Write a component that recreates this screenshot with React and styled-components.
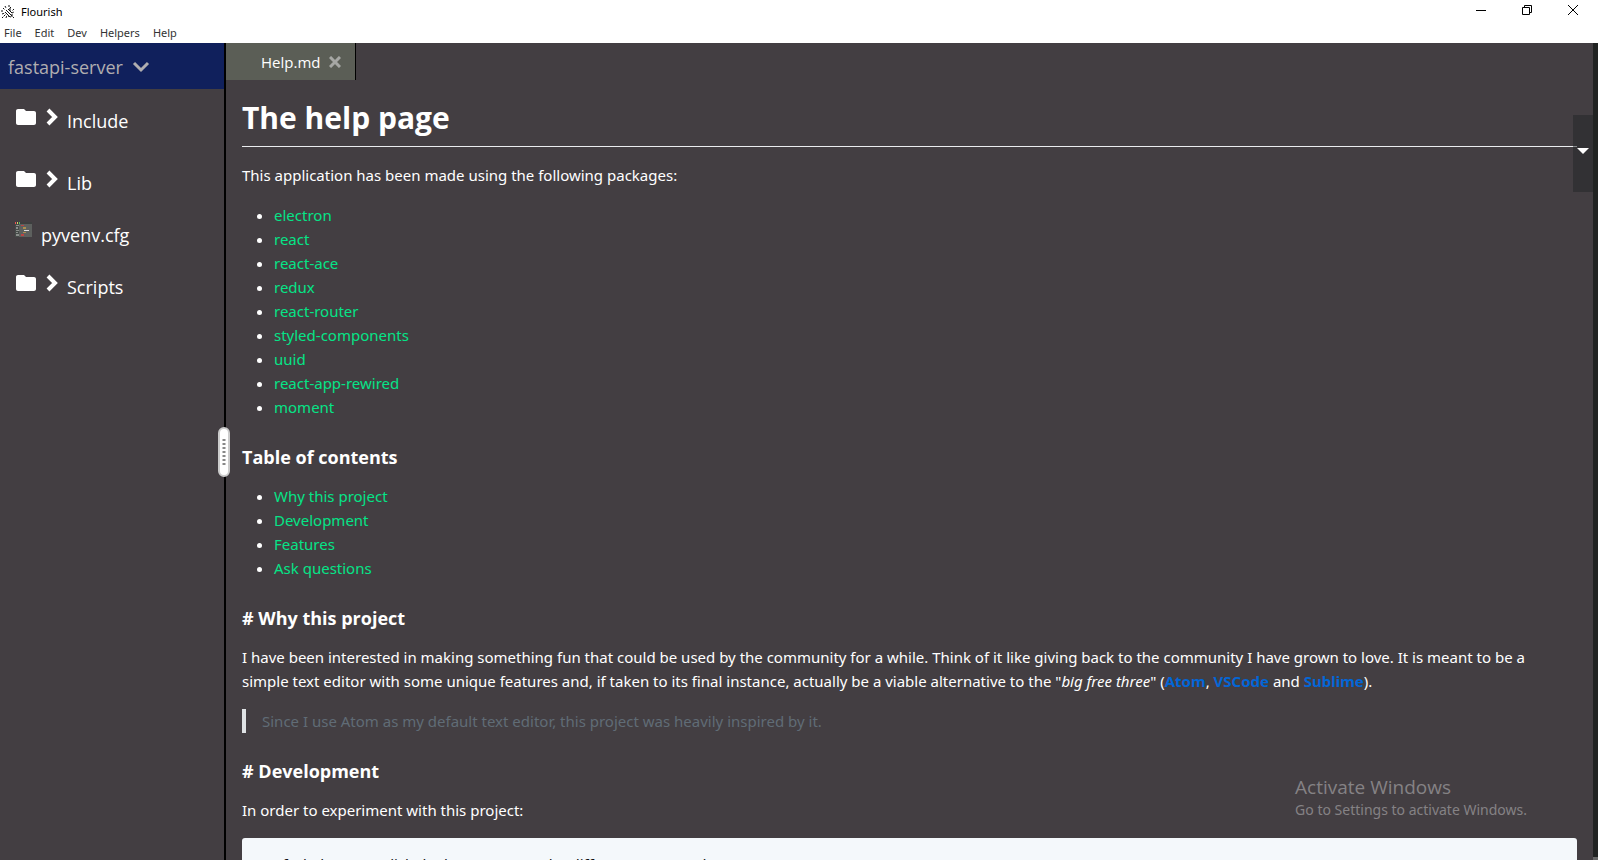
import React from "react";
import styled, { createGlobalStyle } from "styled-components";
import { MdFolder } from "react-icons/md";

const Global = createGlobalStyle`
  * { box-sizing: border-box; }
  html, body, #root { height: 100%; }
  body {
    margin: 0;
    overflow: hidden;
    background: #433e42;
    color: #fff;
    font: 15px/24px "Open Sans", "Noto Sans", sans-serif;
  }
  button { border: 0; padding: 0; background: none; color: inherit; font: inherit; }
  a { text-decoration: none; }
`;

const Window = styled.div`
  display: flex;
  flex-direction: column;
  height: 100vh;
`;

const TitleBar = styled.header`
  display: flex;
  justify-content: space-between;
  flex: none;
  height: 22px;
  background: #fff;
  color: #000;
`;

const AppName = styled.div`
  display: flex;
  align-items: center;
  gap: 5px;
  padding-top: 1px;
  font-family: "Noto Sans", sans-serif;
  font-size: 11px;
  line-height: 22px;
`;

const WindowControls = styled.div`
  display: flex;
  padding-right: 2px;
`;

const ControlButton = styled.button`
  display: flex;
  align-items: center;
  justify-content: center;
  width: 46px;
  height: 20px;
`;

const MenuBar = styled.nav`
  display: flex;
  flex: none;
  gap: 13px;
  height: 21px;
  padding: 0 4px;
  background: #fff;
  color: #333;
  font-family: "Noto Sans", sans-serif;
  font-size: 11px;
  line-height: 21px;
`;

const Workspace = styled.div`
  display: flex;
  flex: 1;
  min-height: 0;
`;

const Sidebar = styled.aside`
  flex: none;
  width: 224px;
`;

const ProjectButton = styled.button`
  display: flex;
  align-items: center;
  gap: 9px;
  width: 100%;
  height: 46px;
  padding: 2px 8px 0;
  background: #10205c;
  color: #b0aeb0;
  font-size: 18px;
`;

const Tree = styled.ul`
  margin: 0;
  padding: 0;
  list-style: none;
`;

const TreeItem = styled.li`
  display: flex;
  height: ${(p) => (p.$file ? "42px" : "62px")};
  padding: ${(p) => (p.$file ? "6px 14px 0" : "16px 14px 0")};
`;

const TreeButton = styled.button`
  display: flex;
  align-items: flex-start;
  gap: ${(p) => (p.$file ? "9px" : "8px")};
  height: 32px;
  font-size: 18px;
  line-height: 32px;
  text-align: left;

  svg { flex: none; }
  span { padding-left: ${(p) => (p.$file ? "0" : "1px")}; }
`;

const Divider = styled.div`
  position: relative;
  flex: none;
  width: 2px;
  background: #000;
`;

const Handle = styled.button`
  position: absolute;
  top: 47%;
  left: 50%;
  z-index: 2;
  display: flex;
  align-items: center;
  justify-content: center;
  width: 12px;
  height: 50px;
  margin-left: -7px;
  border: 2px solid #ccc;
  border-radius: 6px;
  background: #fff;
`;

const Editor = styled.main`
  position: relative;
  display: flex;
  flex: 1;
  flex-direction: column;
  min-width: 0;
`;

const Tabs = styled.div`
  display: flex;
  flex: none;
`;

const Tab = styled.div`
  display: flex;
  align-items: center;
  gap: 9px;
  height: 37px;
  padding: 0 14px 0 35px;
  border-right: 1px solid #000;
  background: #5b5e56;
`;

const CloseTab = styled.button`
  display: flex;
`;

const Page = styled.article`
  flex: 1;
  min-height: 0;
  overflow: hidden;
  padding: 16px;
  font-family: "Noto Sans", sans-serif;
`;

const Title = styled.h1`
  margin: 0 0 16px;
  padding-bottom: 6px;
  border-bottom: 1px solid #eaecef;
  font-family: "Open Sans", sans-serif;
  font-size: 30px;
  font-weight: 700;
  line-height: 44px;
`;

const Heading = styled.h3`
  margin: 26px 0 14px;
  font-family: "Open Sans", sans-serif;
  font-size: 18px;
  font-weight: 700;
  line-height: 25px;
`;

const Paragraph = styled.p`
  margin: 0 0 16px;
  padding-right: 16px;
`;

const List = styled.ul`
  margin: 0 0 16px;
  padding-left: 32px;
`;

const Link = styled.a`
  color: #05e487;
`;

const StrongLink = styled.a`
  color: #0366d6;
  font-weight: 700;
`;

const Quote = styled.blockquote`
  margin: 0 0 16px;
  padding: 0 16px;
  border-left: 4px solid #dfe2e5;
  color: #606c76;
`;

const CodeBlock = styled.pre`
  margin: 0;
  padding: 14px 24px;
  border-radius: 3px;
  background: #f4f8fb;
  color: #111;
  font: inherit;
`;

const Keyword = styled.span`
  color: #7a3fc0;
`;

const ScrollTrack = styled.div`
  display: flex;
  align-items: flex-end;
  flex: none;
  width: 5px;
  background: #212322;
`;

const ScrollThumb = styled.div`
  width: 100%;
  height: 3px;
  background: #686868;
`;

const SideToggle = styled.button`
  position: absolute;
  top: 72px;
  right: 0;
  display: flex;
  align-items: center;
  justify-content: center;
  width: 20px;
  height: 77px;
  padding-bottom: 6px;
  background: rgba(34, 36, 37, 0.5);
`;

const Watermark = styled.aside`
  position: absolute;
  right: 66px;
  bottom: 40px;
  color: #858285;
  font-family: "Noto Sans", sans-serif;
  font-size: 14px;
  line-height: 20px;
`;

const WatermarkTitle = styled.div`
  font-family: "Open Sans", sans-serif;
  font-size: 19px;
  line-height: 25px;
`;

const MENUS = ["File", "Edit", "Dev", "Helpers", "Help"];
const PACKAGES = [
  "electron", "react", "react-ace", "redux", "react-router",
  "styled-components", "uuid", "react-app-rewired", "moment",
];
const SECTIONS = ["Why this project", "Development", "Features", "Ask questions"];
const FILES = [
  { name: "Include" },
  { name: "Lib" },
  { name: "pyvenv.cfg", file: true },
  { name: "Scripts" },
];

const Logo = () => (
  <svg width="16" height="16" viewBox="0 0 16 16" stroke="#111" fill="none" aria-hidden="true">
    <path d="M5 2l1 2M9 1v3M3 4l2 2M1 7h2M2 10l3-1M4 12l2-2M6 14l1-3M11 3l-2 2M14 5l-2 2M2 14l2-2M13 13l1 1M12 9l2-1" strokeDasharray="2 1" />
    <path d="M6 6l6 6M8 5l4 4M5 8l5 5" />
    <path d="M10 4v3M12 10v3M8 12l3 1" />
  </svg>
);

const Chevron = ({ down }) => (
  <svg width={down ? 18 : 12} height={down ? 12 : 24} viewBox={down ? "0 0 18 12" : "0 0 12 24"} fill="none" stroke="currentColor" strokeWidth={down ? 3 : 4} aria-hidden="true">
    <path d={down ? "M2 2l7 7 7-7" : "M2 5l7 7-7 7"} />
  </svg>
);

const FileIcon = () => (
  <svg width="18" height="20" viewBox="0 -3 18 20" aria-hidden="true">
    <path d="M1 0h17v2H1z" fill="#3c3f3f" />
    <path d="M1 2h17v13H1z" fill="#5d605e" />
    <path d="M1 2h4v13H1z" fill="#454a48" />
    <path d="M1 0h1v2H1z" fill="#e55" />
    <path d="M3 0h1v2H3z" fill="#dc6" />
    <path d="M5 0h1v2H5z" fill="#5b6" />
    <path d="M2 3h3v1H2zM2 5h2v2H2zM2 8h3v1H2zM2 10h2v1H2zM2 12h3v2H2z" fill="#8a8d8b" />
    <path d="M7 3h3v1H7zM7 12h3v2H7z" fill="#b44" />
    <path d="M9 5h3v2H9zM9 10h3v1H9z" fill="#aa8f50" />
    <path d="M10 8h5v1h-5z" fill="#ddd" />
  </svg>
);

function FileRow({ name, file }) {
  return (
    <TreeItem $file={file}>
      <TreeButton $file={file}>
        {file ? <FileIcon /> : <><MdFolder size={24} /><Chevron /></>}
        <span>{name}</span>
      </TreeButton>
    </TreeItem>
  );
}

export default function App() {
  return (
    <Window>
      <Global />
      <TitleBar>
        <AppName><Logo />Flourish</AppName>
        <WindowControls>
          <ControlButton aria-label="Minimize">
            <svg width="10" height="10"><path d="M0 5.5h10" stroke="#000" /></svg>
          </ControlButton>
          <ControlButton aria-label="Restore">
            <svg width="10" height="10" fill="none" stroke="#000"><path d="M.5 2.5h7v7h-7zM2.5 2.5v-2h7v7h-2" /></svg>
          </ControlButton>
          <ControlButton aria-label="Close">
            <svg width="10" height="10"><path d="M0 0l10 10M10 0L0 10" stroke="#000" /></svg>
          </ControlButton>
        </WindowControls>
      </TitleBar>
      <MenuBar>{MENUS.map((m) => <button key={m}>{m}</button>)}</MenuBar>
      <Workspace>
        <Sidebar>
          <ProjectButton>fastapi-server<Chevron down /></ProjectButton>
          <Tree>{FILES.map((f) => <FileRow key={f.name} {...f} />)}</Tree>
        </Sidebar>
        <Divider>
          <Handle aria-label="Resize sidebar">
            <svg width="4" height="26"><path d="M2 0v26" stroke="#888" strokeWidth="3" strokeDasharray="2 2" /></svg>
          </Handle>
        </Divider>
        <Editor>
          <Tabs>
            <Tab>
              Help.md
              <CloseTab aria-label="Close Help.md">
                <svg width="12" height="12" stroke="#a6a7a4" strokeWidth="3"><path d="M1 1l10 10M11 1L1 11" /></svg>
              </CloseTab>
            </Tab>
          </Tabs>
          <Page>
            <Title>The help page</Title>
            <Paragraph>This application has been made using the following packages:</Paragraph>
            <List>{PACKAGES.map((p) => <li key={p}><Link href={"#" + p}>{p}</Link></li>)}</List>
            <Heading>Table of contents</Heading>
            <List>{SECTIONS.map((s) => <li key={s}><Link href={"#" + s}>{s}</Link></li>)}</List>
            <Heading># Why this project</Heading>
            <Paragraph>
              I have been interested in making something fun that could be used by the community for a while. Think of it like giving back to the community I have grown to love. It is meant to be a simple text editor with some unique features and, if taken to its final instance, actually be a viable alternative to the "<em>big free three</em>" (<StrongLink href="#atom">Atom</StrongLink>, <StrongLink href="#vscode">VSCode</StrongLink> and <StrongLink href="#sublime">Sublime</StrongLink>).
            </Paragraph>
            <Quote>Since I use Atom as my default text editor, this project was heavily inspired by it.</Quote>
            <Heading># Development</Heading>
            <Paragraph>In order to experiment with this project:</Paragraph>
            <CodeBlock><Keyword>1.</Keyword> fork the repo (click the button or run the different commands)</CodeBlock>
          </Page>
          <SideToggle aria-label="Toggle panel">
            <svg width="12" height="6"><path d="M0 0h12L6 6z" fill="#fff" /></svg>
          </SideToggle>
          <Watermark>
            <WatermarkTitle>Activate Windows</WatermarkTitle>
            Go to Settings to activate Windows.
          </Watermark>
        </Editor>
        <ScrollTrack><ScrollThumb /></ScrollTrack>
      </Workspace>
    </Window>
  );
}
